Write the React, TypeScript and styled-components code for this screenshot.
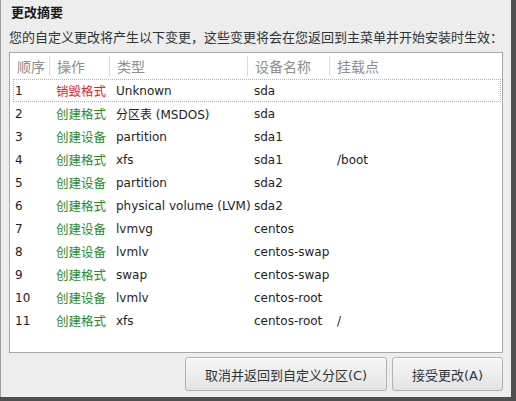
import { FC } from "react";
import styled, { createGlobalStyle } from "styled-components";

const GlobalStyle = createGlobalStyle`
  html, body {
    margin: 0;
    padding: 0;
    background: #4f4f4f;
  }
  body {
    font-family: "DejaVu Sans", "Noto Sans CJK SC", sans-serif;
  }
`;

const Screen = styled.div`
  width: 516px;
  height: 401px;
  display: flex;
  align-items: flex-start;
`;

const Dialog = styled.div`
  width: 511px;
  height: 397px;
  background: #ededed;
  border-left: 1px solid #9c9c9c;
  display: flex;
  flex-direction: column;
  box-sizing: border-box;
  padding: 0 8px 6px 8px;
`;

const Title = styled.div`
  height: 26px;
  line-height: 26px;
  padding-left: 2px;
  font-size: 13px;
  font-weight: bold;
  color: #1a1a1a;
`;

const Subtitle = styled.div`
  height: 24px;
  line-height: 24px;
  font-size: 13px;
  color: #2e3436;
  white-space: nowrap;
  margin-bottom: 2px;
`;

const TableBox = styled.div`
  height: 301px;
  box-sizing: border-box;
  background: #fff;
  border: 1px solid #a9a9a9;
  display: flex;
  flex-direction: column;
`;

const HeaderRow = styled.div`
  display: grid;
  grid-template-columns: 40px 60px 138px 82px 1fr;
  height: 24px;
  margin-bottom: 2px;
`;

const HeaderCell = styled.div<{ $last?: boolean }>`
  display: flex;
  align-items: center;
  padding-left: 7px;
  font-size: 14px;
  color: #8e8e8e;
  border-right: ${(p) => (p.$last ? "none" : "1px solid #dcdcdc")};
  margin: 3px 0 2px;
`;

const Row = styled.div<{ $focus?: boolean }>`
  display: grid;
  grid-template-columns: 37px 60px 138px 82px 1fr;
  height: 23px;
  box-sizing: border-box;
  margin: 0 1px 0 3px;
  border: 1px ${(p) => (p.$focus ? "dotted #b4b4b4" : "solid transparent")};
  font-size: 12px;
  color: #1e1e1e;
`;

const Cell = styled.div<{ $pad?: number; $tone?: "red" | "green" }>`
  display: flex;
  align-items: center;
  padding-left: ${(p) => p.$pad ?? 0}px;
  white-space: nowrap;
  color: ${(p) =>
    p.$tone === "red" ? "#e0262c" : p.$tone === "green" ? "#2a8a2a" : "inherit"};
  font-size: ${(p) => (p.$tone ? "12.5px" : "inherit")};
`;

const ButtonBar = styled.div`
  margin-top: 4px;
  height: 34px;
  display: flex;
  justify-content: flex-end;
  gap: 5px;
`;

const Button = styled.button<{ $w: number }>`
  width: ${(p) => p.$w}px;
  height: 34px;
  box-sizing: border-box;
  border: 1px solid #b3b3b3;
  border-radius: 3px;
  background: linear-gradient(#f6f6f6, #e4e4e4);
  box-shadow: inset 0 1px 0 #ffffff;
  font-family: inherit;
  font-size: 13px;
  color: #2e3436;
  padding: 0;
`;

type Change = {
  n: number;
  op: string;
  destroy?: boolean;
  type: string;
  dev: string;
  mount?: string;
};

const changes: Change[] = [
  { n: 1, op: "销毁格式", destroy: true, type: "Unknown", dev: "sda" },
  { n: 2, op: "创建格式", type: "分区表 (MSDOS)", dev: "sda" },
  { n: 3, op: "创建设备", type: "partition", dev: "sda1" },
  { n: 4, op: "创建格式", type: "xfs", dev: "sda1", mount: "/boot" },
  { n: 5, op: "创建设备", type: "partition", dev: "sda2" },
  { n: 6, op: "创建格式", type: "physical volume (LVM)", dev: "sda2" },
  { n: 7, op: "创建设备", type: "lvmvg", dev: "centos" },
  { n: 8, op: "创建设备", type: "lvmlv", dev: "centos-swap" },
  { n: 9, op: "创建格式", type: "swap", dev: "centos-swap" },
  { n: 10, op: "创建设备", type: "lvmlv", dev: "centos-root" },
  { n: 11, op: "创建格式", type: "xfs", dev: "centos-root", mount: "/" },
];

const App: FC = () => (
  <Screen>
    <GlobalStyle />
    <Dialog>
      <Title>更改摘要</Title>
      <Subtitle>
        您的自定义更改将产生以下变更，这些变更将会在您返回到主菜单并开始安装时生效：
      </Subtitle>
      <TableBox>
        <HeaderRow>
          <HeaderCell>顺序</HeaderCell>
          <HeaderCell>操作</HeaderCell>
          <HeaderCell>类型</HeaderCell>
          <HeaderCell>设备名称</HeaderCell>
          <HeaderCell $last>挂载点</HeaderCell>
        </HeaderRow>
        {changes.map((c) => (
          <Row key={c.n} $focus={c.n === 1}>
            <Cell $pad={1}>{c.n}</Cell>
            <Cell $pad={5} $tone={c.destroy ? "red" : "green"}>
              {c.op}
            </Cell>
            <Cell $pad={5}>{c.type}</Cell>
            <Cell $pad={5}>{c.dev}</Cell>
            <Cell $pad={6}>{c.mount ?? ""}</Cell>
          </Row>
        ))}
      </TableBox>
      <ButtonBar>
        <Button $w={202}>取消并返回到自定义分区(C)</Button>
        <Button $w={111}>接受更改(A)</Button>
      </ButtonBar>
    </Dialog>
  </Screen>
);

export default App;
